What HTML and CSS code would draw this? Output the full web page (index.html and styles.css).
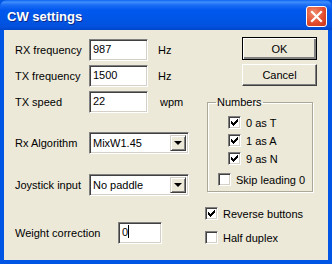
FILE: index.html
```html
<!DOCTYPE html>
<html lang="en">
<head>
    <meta charset="UTF-8">
    <title>CW settings</title>
    <link rel="stylesheet" href="styles.css">
</head>
<body>
    <div class="window">
        <div class="titlebar">
            <span class="title">CW settings</span>
            <div class="close">
                <svg width="13" height="13" viewBox="0 0 13 13">
                    <path d="M2 2 L11 11 M11 2 L2 11" stroke="#fff" stroke-width="2.2" stroke-linecap="square"/>
                </svg>
            </div>
        </div>
        <div class="client">
            <div class="col-left">
                <div class="row row-first">
                    <span class="label">RX frequency</span>
                    <div class="edit">987</div>
                    <span class="unit">Hz</span>
                </div>
                <div class="row">
                    <span class="label">TX frequency</span>
                    <div class="edit">1500</div>
                    <span class="unit">Hz</span>
                </div>
                <div class="row">
                    <span class="label">TX speed</span>
                    <div class="edit">22</div>
                    <span class="unit wpm">wpm</span>
                </div>
                <div class="row row-algo">
                    <span class="label">Rx Algorithm</span>
                    <div class="combo">
                        <span class="combo-text">MixW1.45</span>
                        <span class="combo-btn"><i class="arrow"></i></span>
                    </div>
                </div>
                <div class="row row-joy">
                    <span class="label">Joystick input</span>
                    <div class="combo">
                        <span class="combo-text">No paddle</span>
                        <span class="combo-btn"><i class="arrow"></i></span>
                    </div>
                </div>
                <div class="row row-weight">
                    <span class="label label-wide">Weight correction</span>
                    <div class="edit edit-small">0<span class="caret"></span></div>
                </div>
            </div>

            <div class="col-right">
                <button class="btn btn-default">OK</button>
                <button class="btn btn-cancel">Cancel</button>

                <fieldset class="group">
                    <legend>Numbers</legend>
                    <label class="check check-in check-first"><span class="box checked"></span>0 as T</label>
                    <label class="check check-in"><span class="box checked"></span>1 as A</label>
                    <label class="check check-in"><span class="box checked"></span>9 as N</label>
                    <label class="check check-skip"><span class="box"></span>Skip leading 0</label>
                </fieldset>

                <label class="check check-rev"><span class="box checked"></span>Reverse buttons</label>
                <label class="check check-half"><span class="box"></span>Half duplex</label>
            </div>
        </div>
    </div>
</body>
</html>
```

FILE: styles.css
```css
body {
    margin: 0;
    background: #ece9d8;
    font-family: "Liberation Sans", Arial, sans-serif;
    font-size: 11px;
    color: #000;
}
.window {
    width: 332px;
    height: 264px;
    display: flex;
    flex-direction: column;
    background: #0055e5;
}
.titlebar {
    height: 30px;
    flex: none;
    display: flex;
    align-items: center;
    justify-content: space-between;
    padding: 0 5px 0 7px;
    box-sizing: border-box;
    border-radius: 7px 7px 0 0;
    background: linear-gradient(#0a62f2 0, #3f8ffa 2px, #1b6df5 5px, #0058ee 10px, #0055e5 20px, #0350dc 27px, #0045c8 30px);
}
.title {
    color: #fff;
    font-weight: bold;
    font-size: 13px;
    text-shadow: 1px 1px #0a2a8a;
    margin-top: 2px;
}
.close {
    width: 21px;
    height: 21px;
    box-sizing: border-box;
    border: 1px solid #fff;
    border-radius: 3px;
    background: radial-gradient(circle at 35% 30%, #f08a6c, #e04a2b 60%, #c6361c);
    display: flex;
    align-items: center;
    justify-content: center;
    margin-top: 2px;
}
.client {
    flex: 1;
    margin: 0 4px 4px 4px;
    background: #ece9d8;
    display: flex;
}
.col-left {
    width: 190px;
    padding: 9px 0 0 11px;
    box-sizing: border-box;
}
.row {
    display: flex;
    align-items: center;
    height: 22px;
    margin-top: 4px;
}
.row-first { margin-top: 0; }
.row-algo { margin-top: 19px; }
.row-joy { margin-top: 20px; }
.row-weight { margin-top: 26px; }
.label {
    width: 74px;
    flex: none;
}
.label-wide { width: 103px; }
.edit {
    width: 59px;
    height: 22px;
    box-sizing: border-box;
    background: #fff;
    border: 1px solid;
    border-color: #808080 #fff #fff #808080;
    box-shadow: inset 1px 1px #404040, inset -1px -1px #d4d0c8;
    padding: 2px 0 0 3px;
    line-height: 14px;
}
.edit-small { width: 44px; }
.caret {
    display: inline-block;
    width: 1px;
    height: 13px;
    background: #000;
    vertical-align: -2px;
}
.unit { margin-left: 10px; }
.wpm { margin-left: 12px; }
.combo {
    width: 100px;
    height: 22px;
    box-sizing: border-box;
    background: #fff;
    border: 1px solid;
    border-color: #808080 #fff #fff #808080;
    box-shadow: inset 1px 1px #404040, inset -1px -1px #d4d0c8;
    display: flex;
    align-items: center;
    justify-content: space-between;
    padding: 2px;
}
.combo-text { padding-left: 1px; }
.combo-btn {
    width: 16px;
    height: 16px;
    box-sizing: border-box;
    background: #ece9d8;
    border: 1px solid;
    border-color: #d4d0c8 #404040 #404040 #d4d0c8;
    box-shadow: inset 1px 1px #fff, inset -1px -1px #808080;
    display: flex;
    align-items: center;
    justify-content: center;
}
.arrow {
    width: 0;
    height: 0;
    border-left: 4px solid transparent;
    border-right: 4px solid transparent;
    border-top: 4px solid #000;
}
.col-right {
    flex: 1;
    padding: 7px 0 0 11px;
    display: flex;
    flex-direction: column;
    align-items: flex-start;
}
.btn {
    width: 75px;
    height: 23px;
    margin-left: 37px;
    font-family: "Liberation Sans", Arial, sans-serif;
    font-size: 11px;
    background: #ece9d8;
    border: 1px solid;
    border-color: #fff #404040 #404040 #fff;
    box-shadow: inset -1px -1px #808080;
    padding: 0;
    color: #000;
}
.btn-default {
    border-color: #000;
    box-shadow: inset 1px 1px #fff, inset -2px -2px #808080;
}
.btn-cancel {
    margin-top: 4px;
    height: 22px;
}
.group {
    width: 106px;
    height: 96px;
    box-sizing: border-box;
    margin: 10px 0 0 2px;
    padding: 5px 0 0 10px;
    border: 1px solid #aca899;
    box-shadow: inset 1px 1px #fff, 1px 1px #fff;
    display: flex;
    flex-direction: column;
}
.group legend {
    padding: 0 1px;
    margin-left: -2px;
    line-height: 12px;
}
.check {
    display: flex;
    align-items: center;
    height: 13px;
}
.box {
    width: 13px;
    height: 13px;
    box-sizing: border-box;
    background: #fff;
    border: 1px solid;
    border-color: #808080 #fff #fff #808080;
    box-shadow: inset 1px 1px #404040, inset -1px -1px #d4d0c8;
    margin-right: 5px;
    flex: none;
}
.box.checked {
    background: #fff url("data:image/svg+xml,%3Csvg xmlns='http://www.w3.org/2000/svg' width='7' height='7'%3E%3Cpath d='M0 2h1v1h1v1h1V3h1V2h1V1h1V0h1v3H6v1H5v1H4v1H3v1H2V6H1V5H0z' fill='%23000'/%3E%3C/svg%3E") no-repeat 2px 2px;
}
.check-in { margin-left: 10px; margin-top: 5px; }
.check-first { margin-top: 3px; }
.check-skip { margin-top: 8px; }
.check-rev { margin-top: 15px; }
.check-half { margin-top: 11px; }
```
